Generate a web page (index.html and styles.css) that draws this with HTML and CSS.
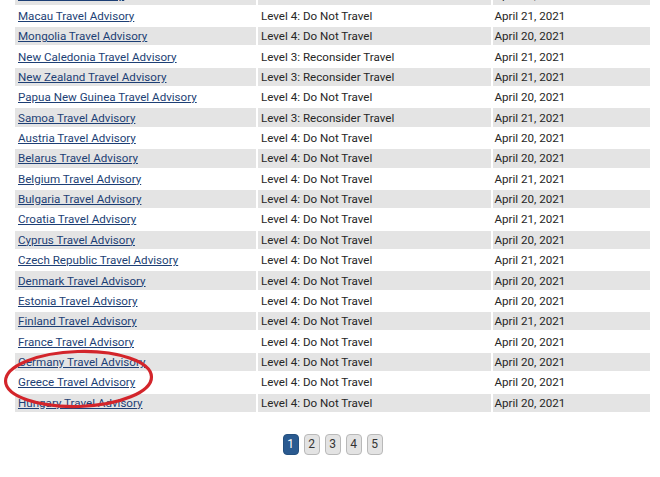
FILE: index.html
```html
<!DOCTYPE html>
<html>
<head>
<meta charset="utf-8">
<link rel="stylesheet" href="styles.css">
</head>
<body>
<div class="page">
  <table class="advisories">
    <tbody>
      <tr class="alt"><td><a href="#">Laos Travel Advisory</a></td><td>Level 4: Do Not Travel</td><td>April 21, 2021</td></tr>
      <tr><td><a href="#">Macau Travel Advisory</a></td><td>Level 4: Do Not Travel</td><td>April 21, 2021</td></tr>
      <tr class="alt"><td><a href="#">Mongolia Travel Advisory</a></td><td>Level 4: Do Not Travel</td><td>April 20, 2021</td></tr>
      <tr><td><a href="#">New Caledonia Travel Advisory</a></td><td>Level 3: Reconsider Travel</td><td>April 21, 2021</td></tr>
      <tr class="alt"><td><a href="#">New Zealand Travel Advisory</a></td><td>Level 3: Reconsider Travel</td><td>April 21, 2021</td></tr>
      <tr><td><a href="#">Papua New Guinea Travel Advisory</a></td><td>Level 4: Do Not Travel</td><td>April 20, 2021</td></tr>
      <tr class="alt"><td><a href="#">Samoa Travel Advisory</a></td><td>Level 3: Reconsider Travel</td><td>April 21, 2021</td></tr>
      <tr><td><a href="#">Austria Travel Advisory</a></td><td>Level 4: Do Not Travel</td><td>April 20, 2021</td></tr>
      <tr class="alt"><td><a href="#">Belarus Travel Advisory</a></td><td>Level 4: Do Not Travel</td><td>April 20, 2021</td></tr>
      <tr><td><a href="#">Belgium Travel Advisory</a></td><td>Level 4: Do Not Travel</td><td>April 21, 2021</td></tr>
      <tr class="alt"><td><a href="#">Bulgaria Travel Advisory</a></td><td>Level 4: Do Not Travel</td><td>April 20, 2021</td></tr>
      <tr><td><a href="#">Croatia Travel Advisory</a></td><td>Level 4: Do Not Travel</td><td>April 21, 2021</td></tr>
      <tr class="alt"><td><a href="#">Cyprus Travel Advisory</a></td><td>Level 4: Do Not Travel</td><td>April 20, 2021</td></tr>
      <tr><td><a href="#">Czech Republic Travel Advisory</a></td><td>Level 4: Do Not Travel</td><td>April 21, 2021</td></tr>
      <tr class="alt"><td><a href="#">Denmark Travel Advisory</a></td><td>Level 4: Do Not Travel</td><td>April 20, 2021</td></tr>
      <tr><td><a href="#">Estonia Travel Advisory</a></td><td>Level 4: Do Not Travel</td><td>April 20, 2021</td></tr>
      <tr class="alt"><td><a href="#">Finland Travel Advisory</a></td><td>Level 4: Do Not Travel</td><td>April 21, 2021</td></tr>
      <tr><td><a href="#">France Travel Advisory</a></td><td>Level 4: Do Not Travel</td><td>April 20, 2021</td></tr>
      <tr class="alt"><td><a href="#">Germany Travel Advisory</a></td><td>Level 4: Do Not Travel</td><td>April 20, 2021</td></tr>
      <tr><td><a href="#">Greece Travel Advisory</a></td><td>Level 4: Do Not Travel</td><td>April 20, 2021</td></tr>
      <tr class="alt"><td><a href="#">Hungary Travel Advisory</a></td><td>Level 4: Do Not Travel</td><td>April 20, 2021</td></tr>
    </tbody>
  </table>
  <nav class="pager">
    <span class="page-btn active">1</span>
    <span class="page-btn">2</span>
    <span class="page-btn">3</span>
    <span class="page-btn">4</span>
    <span class="page-btn">5</span>
  </nav>
  <svg class="circle-mark" width="160" height="70" viewBox="0 0 160 70">
    <ellipse cx="78.5" cy="33" rx="73" ry="27.5" transform="rotate(-1.8 78.5 33)" fill="none" stroke="#d3252b" stroke-width="3.2"/>
  </svg>
</div>
</body>
</html>
```
FILE: styles.css
```css
html, body {
  margin: 0;
  padding: 0;
  background: #ffffff;
}
.page {
  position: relative;
  width: 660px;
  height: 477px;
  overflow: hidden;
  font-family: "Roboto", "Liberation Sans", sans-serif;
  font-size: 11.6px;
  color: #262626;
}
.advisories {
  margin: -15.7px 0 0 13px;
  width: 639px;
  border-collapse: separate;
  border-spacing: 2px;
  table-layout: fixed;
}
.advisories td {
  height: 18.37px;
  padding: 0 3px;
  box-sizing: border-box;
  white-space: nowrap;
  line-height: 18px;
}
.advisories td:nth-child(1) { width: 241px; }
.advisories td:nth-child(2) { width: 232.5px; }
.advisories td:nth-child(3) { width: 157.5px; padding-left: 2px; }
.advisories tr.alt td { background: #e4e4e4; }
.advisories a {
  color: #1d3f75;
  text-decoration: underline;
}
.pager {
  display: flex;
  justify-content: center;
  gap: 5px;
  margin-top: 20px;
  padding-left: 5px;
}
.page-btn {
  width: 16px;
  height: 21px;
  box-sizing: border-box;
  border: 1px solid #b9b9b9;
  border-radius: 4px;
  background: #e3e3e3;
  color: #333;
  display: flex;
  align-items: center;
  justify-content: center;
  font-size: 12px;
}
.page-btn.active {
  background: #2a5a90;
  border-color: #24507f;
  color: #ffffff;
}
.circle-mark {
  position: absolute;
  left: 0;
  top: 346px;
}
```
